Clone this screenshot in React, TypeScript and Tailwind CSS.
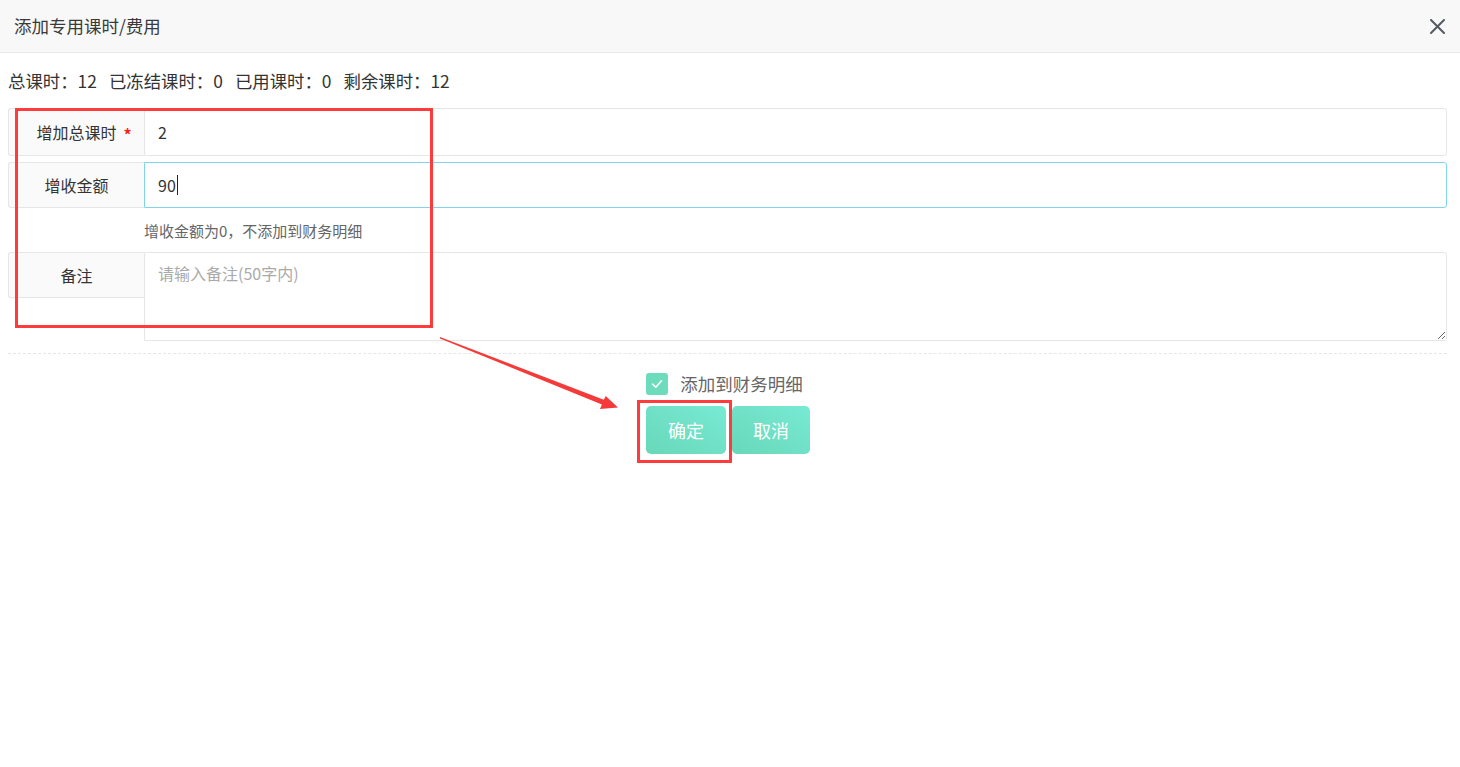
import React from "react";

function Row({
  label,
  required,
  heightClass,
  focused,
  children,
}: {
  label: string;
  required?: boolean;
  heightClass: string;
  focused?: boolean;
  children: React.ReactNode;
}) {
  return (
    <div className={`flex ${heightClass}`}>
      <div className="w-[136px] shrink-0 bg-[#fafafa] border border-r-0 border-[#e6e6e6] rounded-l-[3px] flex items-center justify-center text-[16px] leading-[20px] text-[#333]">
        <span className="relative">
          {label}
          {required && (
            <span className="absolute left-[calc(100%+7px)] top-[2px] text-[#f22] text-[16px] leading-[20px] font-bold">*</span>
          )}
        </span>
      </div>
      <div
        className={`flex-1 border rounded-r-[3px] flex items-center pl-[13px] text-[16px] text-[#333] ${
          focused ? "border-[#80d6e8]" : "border-[#e6e6e6]"
        }`}
      >
        {children}
      </div>
    </div>
  );
}

export default function App() {
  return (
    <div className="relative w-full h-[767px] bg-white font-['Noto_Sans_CJK_SC','Noto_Sans',sans-serif] overflow-hidden">
      {/* Header */}
      <div className="h-[53px] bg-[#f8f8f8] border-b border-[#e8e8e8] flex items-center justify-between pl-[14px] pr-[15px]">
        <span className="text-[17.5px] leading-[24px] text-[#3a3a3a]">添加专用课时/费用</span>
        <svg width="15" height="15" viewBox="0 0 15 15" className="mt-[1px]">
          <path d="M1 1 L14 14 M14 1 L1 14" stroke="#555a64" strokeWidth="2" strokeLinecap="round" />
        </svg>
      </div>

      {/* Body */}
      <div className="pl-[8px] pr-[13px]">
        <div className="pt-[16px] flex gap-[12px] text-[17.4px] leading-[24px] text-[#333]">
          <span>总课时：12</span>
          <span>已冻结课时：0</span>
          <span>已用课时：0</span>
          <span>剩余课时：12</span>
        </div>

        <div className="mt-[15px] flex flex-col">
          <Row label="增加总课时" required heightClass="h-[48px]">
            <span>2</span>
          </Row>
          <div className="mt-[6px]">
            <Row label="增收金额" heightClass="h-[46px]" focused>
              <span>90</span>
              <span className="inline-block w-px h-[20px] bg-[#222] ml-[1px]" />
            </Row>
          </div>
          <div className="mt-[13px] pl-[136px] text-[15px] leading-[20px] text-[#666]">
            增收金额为0，不添加到财务明细
          </div>
          <div className="mt-[11px] flex items-start">
            <div className="w-[136px] h-[46px] shrink-0 bg-[#fafafa] border border-r-0 border-[#e6e6e6] rounded-l-[3px] flex items-center justify-center text-[16px] leading-[20px] text-[#333]">
              备注
            </div>
            <textarea
              className="flex-1 h-[89px] border border-[#e6e6e6] rounded-r-[3px] pl-[13px] pt-[10px] text-[16px] leading-[20px] text-[#333] placeholder:text-[#aaa] outline-none resize-y"
              placeholder="请输入备注(50字内)"
            />
          </div>
          <div className="mt-[12px] border-t border-dashed border-[#e6e6e6]" />

          <div className="mt-[19px] flex justify-center pr-[6px]">
            <div className="flex items-center">
              <div className="w-[22px] h-[22px] rounded-[3px] bg-[#6cdcbd] flex items-center justify-center">
                <svg width="14" height="14" viewBox="0 0 14 14">
                  <path d="M2.5 7.2 L5.8 10.2 L11.5 3.8" fill="none" stroke="#fff" strokeWidth="1.6" strokeLinecap="round" strokeLinejoin="round" />
                </svg>
              </div>
              <span className="ml-[12px] text-[17.5px] leading-[22px] text-[#666]">添加到财务明细</span>
            </div>
          </div>

          <div className="mt-[11px] flex justify-center gap-[6px] pl-[1px]">
            <button className="w-[80px] h-[48px] rounded-[5px] bg-gradient-to-tr from-[#68d8b9] to-[#78ead4] text-white text-[18px] leading-[24px]">
              确定
            </button>
            <button className="w-[78px] h-[48px] rounded-[5px] bg-gradient-to-tr from-[#68d8b9] to-[#78ead4] text-white text-[18px] leading-[24px]">
              取消
            </button>
          </div>
        </div>
      </div>

      {/* Annotations */}
      <div className="absolute left-[15px] top-[108px] w-[418px] h-[220px] border-[3px] border-[#ff3b3b] pointer-events-none" />
      <div className="absolute left-[637px] top-[400px] w-[95px] h-[63px] border-[3px] border-[#ff3b3b] pointer-events-none" />
      <svg className="absolute left-0 top-0 pointer-events-none" width="1460" height="767">
        <polygon
          points="440,337 603.8,399.8 605.7,396 618,407.5 600,409 601.9,404.5 440,338.4"
          fill="#f53a3a"
        />
      </svg>
    </div>
  );
}
